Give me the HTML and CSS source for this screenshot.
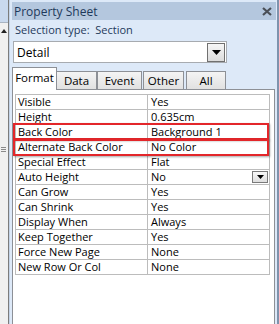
FILE: index.html
```html
<!DOCTYPE html>
<html>
    <head>
        <link rel="stylesheet" href="styles.css">
    </head>
    <body>
        <div class="screen">
            <div class="side">
                <div class="side-top"></div>
                <div class="side-arrow"></div>
                <div class="grip"></div>
            </div>

            <div class="panel">
                <div class="title">
                    <span>Property Sheet</span>
                    <svg class="close" width="10" height="9" viewBox="0 0 10 9">
                        <path d="M1 1 L9 8 M9 1 L1 8" stroke="#4a4f57" stroke-width="2.2"/>
                    </svg>
                </div>

                <div class="seltype">Selection type:&nbsp; Section</div>

                <div class="combo">
                    <span class="combo-text">Detail</span>
                    <span class="combo-btn">
                        <svg width="9" height="5" viewBox="0 0 9 5"><path d="M0 0 H9 L4.5 5 Z" fill="#000"/></svg>
                    </span>
                </div>

                <div class="tabs">
                    <div class="tab active t-format">Format</div>
                    <div class="tab t-data">Data</div>
                    <div class="tab t-event">Event</div>
                    <div class="tab t-other">Other</div>
                    <div class="tab t-all">All</div>
                </div>

                <div class="pane">
                    <div class="grid">
                        <div class="row"><div class="name">Visible</div><div class="val">Yes</div></div>
                        <div class="row"><div class="name">Height</div><div class="val">0.635cm</div></div>
                        <div class="row"><div class="name">Back Color</div><div class="val">Background 1</div></div>
                        <div class="row"><div class="name">Alternate Back Color</div><div class="val">No Color</div></div>
                        <div class="row"><div class="name">Special Effect</div><div class="val">Flat</div></div>
                        <div class="row">
                            <div class="name">Auto Height</div>
                            <div class="val">No
                                <span class="mini-btn">
                                    <svg width="7" height="4" viewBox="0 0 7 4"><path d="M0 0 H7 L3.5 4 Z" fill="#000"/></svg>
                                </span>
                            </div>
                        </div>
                        <div class="row"><div class="name">Can Grow</div><div class="val">Yes</div></div>
                        <div class="row"><div class="name">Can Shrink</div><div class="val">Yes</div></div>
                        <div class="row"><div class="name">Display When</div><div class="val">Always</div></div>
                        <div class="row"><div class="name">Keep Together</div><div class="val">Yes</div></div>
                        <div class="row"><div class="name">Force New Page</div><div class="val">None</div></div>
                        <div class="row"><div class="name">New Row Or Col</div><div class="val">None</div></div>

                        <div class="mark mark-1"></div>
                        <div class="mark mark-2"></div>
                    </div>
                </div>
            </div>
        </div>
    </body>
</html>
```

FILE: styles.css
```css
body {
    margin: 0;
    font-family: "Open Sans", "Noto Sans", sans-serif;
    font-size: 11px;
    color: #000;
    overflow: hidden;
}

.screen {
    display: flex;
    width: 279px;
    height: 324px;
    overflow: hidden;
}

.side {
    width: 8px;
    background-color: #f0f0f0;
    border-right: 1px solid #7c7c7c;
}

.side-top {
    height: 22px;
    background-color: #c9d9ee;
    border-bottom: 1px solid #a9b4c2;
}

.side-arrow {
    margin: 6px 0 0 1px;
    width: 0;
    height: 0;
    border-left: 3px solid transparent;
    border-right: 3px solid transparent;
    border-bottom: 4px solid #222;
}

.grip {
    margin: 114px 0 0 1px;
    width: 5px;
    height: 5px;
    background: repeating-linear-gradient(#8a8a8a 0 1px, transparent 1px 2px);
}

.panel {
    flex: 1;
    background-color: #dde9f8;
    border-left: 1px solid #c3d3e8;
    border-right: 2px solid #7f93ad;
    padding: 2px 1px 0 2px;
}

.title {
    height: 18px;
    background-color: #b4c7de;
    display: flex;
    align-items: center;
    justify-content: space-between;
    padding: 0 4px 0 2px;
    font-size: 12px;
    color: #1e395b;
}

.close {
    margin-top: 1px;
}

.seltype {
    color: #1e395b;
    padding: 1px 0 0 3px;
    height: 18px;
    line-height: 17px;
}

.combo {
    margin: 2px 0 0 1px;
    width: 212px;
    height: 20px;
    background-color: #fff;
    border: 1px solid #a7abb0;
    display: flex;
    align-items: center;
    justify-content: space-between;
    font-size: 12px;
}

.combo-text {
    padding-left: 3px;
}

.combo-btn {
    width: 16px;
    height: 17px;
    margin-right: 1px;
    border: 1px solid #707070;
    background: linear-gradient(#f6f6f6, #dcdcdc);
    display: flex;
    align-items: center;
    justify-content: center;
}

.tabs {
    display: flex;
    align-items: flex-end;
    height: 22px;
    margin-top: 4px;
    position: relative;
    z-index: 1;
}

.tab {
    height: 17px;
    line-height: 17px;
    text-align: center;
    border: 1px solid #8d9096;
    border-bottom: none;
    background: linear-gradient(#f4f4f4, #e1e1e1);
    font-size: 11.5px;
}

.tab.active {
    height: 22px;
    line-height: 20px;
    background: #fff;
    margin-bottom: -1px;
}

.t-format { width: 43px; }
.t-data { width: 39px; margin-left: -1px; }
.t-event { width: 43px; }
.t-other { width: 39px; margin-left: 1px; }
.t-all { width: 38px; margin-left: 2px; }

.pane {
    background-color: #fff;
    border: 1px solid #8d9096;
    border-bottom: none;
    width: 259px;
    height: 240px;
    padding: 4px 0 0 2px;
}

.grid {
    width: 253px;
    border: 1px solid #bcbcbc;
    border-bottom: none;
    position: relative;
}

.row {
    display: flex;
    height: 14px;
    line-height: 14px;
    border-bottom: 1px solid #bcbcbc;
}

.name {
    width: 129px;
    padding-left: 2px;
    border-right: 1px solid #bcbcbc;
    white-space: nowrap;
}

.val {
    flex: 1;
    padding-left: 3px;
    position: relative;
}

.mini-btn {
    position: absolute;
    right: 1px;
    top: 1px;
    width: 14px;
    height: 10px;
    border: 1px solid #7a7a7a;
    background: linear-gradient(#f8f8f8, #dedede);
    display: flex;
    align-items: center;
    justify-content: center;
}

.mark {
    position: absolute;
    left: -3px;
    width: 252px;
    height: 13px;
    border: 2px solid #e3262a;
    box-shadow: 1px 1px 2px rgba(0, 0, 0, 0.35);
}

.mark-1 { top: 28px; }
.mark-2 { top: 44px; }
```
